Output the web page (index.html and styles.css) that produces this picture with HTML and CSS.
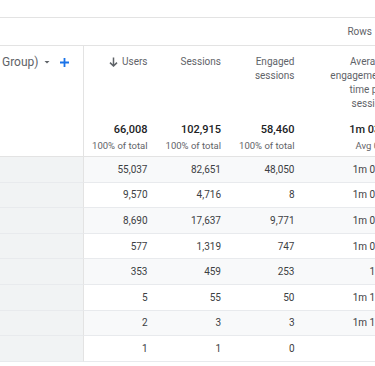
FILE: index.html
```html
<!DOCTYPE html>
<html lang="en">
<head>
  <meta charset="UTF-8" />
  <meta name="viewport" content="width=device-width, initial-scale=1" />
  <title>Report - Traffic acquisition</title>
  <link rel="stylesheet" href="styles.css">
</head>
<body>

<div class="top"></div>
<div class="toolbar"><span>Rows</span></div>

<table class="report">
  <colgroup>
    <col class="c-dim">
    <col class="c-metric">
    <col class="c-metric">
    <col class="c-metric">
    <col class="c-avg">
  </colgroup>
  <thead>
    <tr>
      <th class="dim">
        <div class="dim-head">
          <span class="dim-label">Group)</span>
          <svg class="caret" width="10" height="10" viewBox="0 0 10 10"><path d="M2.5 4 L7.5 4 L5 6.5 Z" fill="#5f6368"/></svg>
          <svg class="plus" width="11" height="11" viewBox="0 0 11 11"><path d="M5.5 1 V10 M1 5.5 H10" stroke="#1a73e8" stroke-width="1.8"/></svg>
        </div>
      </th>
      <th>
        <div class="metric">
          <div class="label sorted">
            <svg width="9" height="10" viewBox="0 0 9 10"><path d="M4.5 0.5 V9 M1 5.6 L4.5 9 L8 5.6" fill="none" stroke="#5f6368" stroke-width="1.5"/></svg>
            Users
          </div>
          <div class="total"><b>66,008</b><span>100% of total</span></div>
        </div>
      </th>
      <th>
        <div class="metric">
          <div class="label">Sessions</div>
          <div class="total"><b>102,915</b><span>100% of total</span></div>
        </div>
      </th>
      <th>
        <div class="metric">
          <div class="label">Engaged sessions</div>
          <div class="total"><b>58,460</b><span>100% of total</span></div>
        </div>
      </th>
      <th>
        <div class="metric">
          <div class="label">Average engagement time per session</div>
          <div class="total"><b>1m 03s</b><span>Avg 0%</span></div>
        </div>
      </th>
    </tr>
  </thead>
  <tbody>
    <tr class="hl"><td class="dim"></td><td>55,037</td><td>82,651</td><td>48,050</td><td>1m 00s</td></tr>
    <tr><td class="dim"></td><td>9,570</td><td>4,716</td><td>8</td><td>1m 08s</td></tr>
    <tr><td class="dim"></td><td>8,690</td><td>17,637</td><td>9,771</td><td>1m 01s</td></tr>
    <tr><td class="dim"></td><td>577</td><td>1,319</td><td>747</td><td>1m 04s</td></tr>
    <tr><td class="dim"></td><td>353</td><td>459</td><td>253</td><td>17s</td></tr>
    <tr><td class="dim"></td><td>5</td><td>55</td><td>50</td><td>1m 16s</td></tr>
    <tr><td class="dim"></td><td>2</td><td>3</td><td>3</td><td>1m 16s</td></tr>
    <tr><td class="dim"></td><td>1</td><td>1</td><td>0</td><td>0s</td></tr>
  </tbody>
</table>

</body>
</html>
```

FILE: styles.css
```css
* { margin: 0; padding: 0; box-sizing: border-box; }
body { width: 375px; height: 366px; overflow: hidden; background: #fff; font-family: Roboto, "Liberation Sans", sans-serif; color: #3c4043; }

.top { height: 18px; border-bottom: 1px solid #e3e3e3; }
.toolbar { height: 28px; border-bottom: 1px solid #e3e3e3; display: flex; align-items: center; justify-content: flex-end; padding-right: 3px; font-size: 10px; color: #5f6368; }

.report { border-collapse: separate; border-spacing: 0; table-layout: fixed; width: 396px; }
.c-dim { width: 84px; }
.c-metric { width: 73.5px; }
.c-avg { width: 91.5px; }

.report th { font-weight: normal; vertical-align: top; border-bottom: 1px solid #e3e3e3; }
.report th.dim { border-right: 1px solid #e3e3e3; }
.dim-head { display: flex; align-items: center; height: 16px; margin-top: 8px; padding-left: 2px; font-size: 12px; color: #5f6368; }
.dim-label { white-space: nowrap; }
.caret { margin-left: 3px; }
.plus { margin-left: 7px; }

.metric { height: 110px; display: flex; flex-direction: column; justify-content: space-between; align-items: flex-end; padding: 9px 10px 3px 0; text-align: right; }
.label { max-width: 66px; font-size: 10px; line-height: 14px; color: #5f6368; }
.label.sorted { display: flex; align-items: center; gap: 4px; }
.total { display: flex; flex-direction: column; align-items: flex-end; }
.total b { font-size: 11px; line-height: 14px; font-weight: 500; color: #202124; white-space: nowrap; }
.total span { margin-top: 2px; font-size: 9.5px; line-height: 14px; color: #5f6368; white-space: nowrap; }

.report td { height: 25.6px; padding: 1px 10px 0 0; text-align: right; font-size: 10px; line-height: 14px; color: #3c4043; border-bottom: 1px solid #e8eaed; white-space: nowrap; }
.report tbody tr:nth-child(odd) td { background: #f8f9fa; }
.report td.dim { background: #f1f3f4; border-right: 1px solid #e3e3e3; }
.report tbody tr:nth-child(odd) td.dim { background: #f1f3f4; }
.report tr.hl td { background: #e9eaee; }
.report tr.hl td.dim { background: #dadce0; }
```
